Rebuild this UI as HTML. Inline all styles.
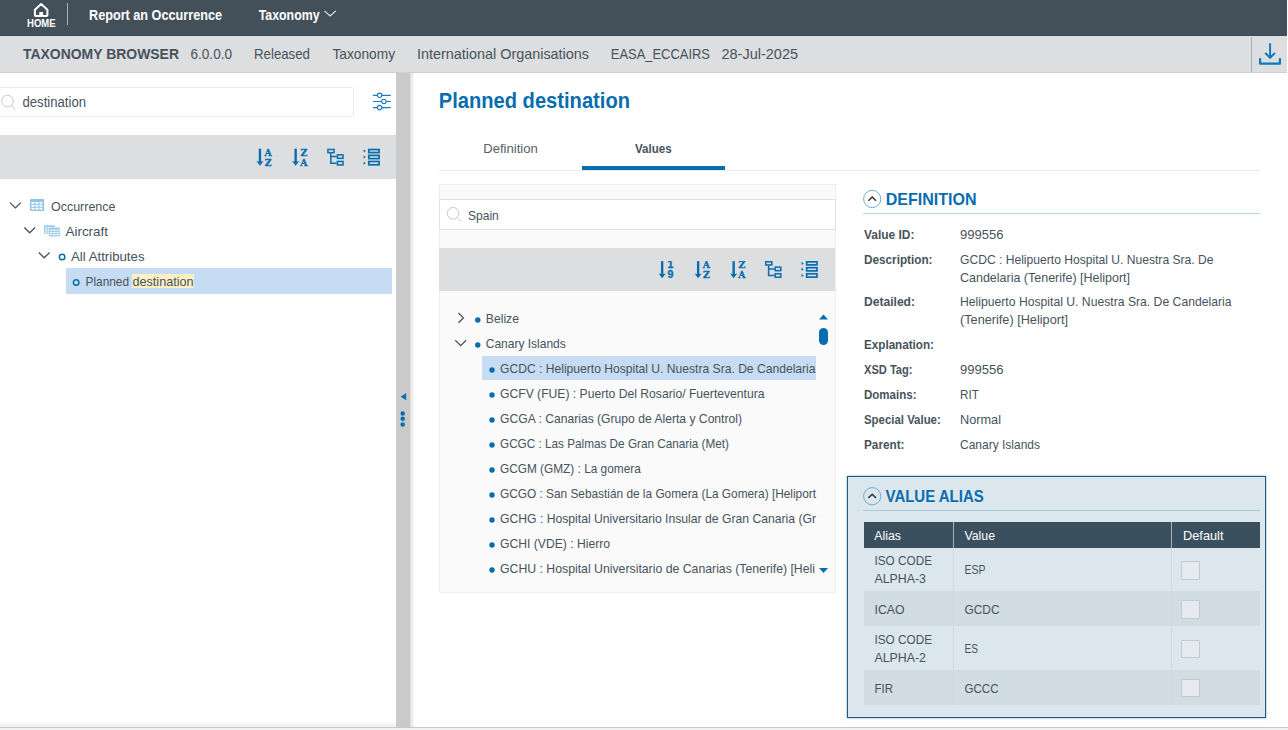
<!DOCTYPE html>
<html lang="en"><head><meta charset="utf-8"><title>Taxonomy Browser</title>
<style>
html,body{margin:0;padding:0;background:#fff;width:1288px;height:730px;overflow:hidden}
body{position:relative;font-family:"Liberation Sans",sans-serif}
.b{position:absolute;box-sizing:border-box;display:block}
.t{position:absolute;white-space:pre;line-height:normal;transform-origin:0 0;display:block}
section,header,nav,aside,main{display:block;margin:0;padding:0;height:0}
</style></head><body>
<header>
<div class="b" style="left:0px;top:0px;width:1287px;height:36px;background:#43505a;border-bottom:1px solid #3c4a54;"></div>
<svg class="b" style="left:32px;top:1px;" width="19" height="18" viewBox="0 0 19 18"><path d="M2.9 8.7L9.15 3L15.4 8.7V14Q15.4 14.9 14.5 14.9H3.8Q2.9 14.9 2.9 14Z" fill="none" stroke="#fff" stroke-width="2" stroke-linejoin="round"/><rect x="7.3" y="11" width="3.75" height="3.9" fill="#fff"/></svg>
<div class="b" style="left:67px;top:3px;width:1px;height:22px;background:rgba(255,255,255,.55);"></div>
<svg class="b" style="left:324px;top:10px;" width="13" height="8" viewBox="0 0 13 8"><g transform="translate(0 0.2)"><path d="M0.4 0.6L6.1 5.8L11.799999999999999 0.6" fill="none" stroke="#e8eaeb" stroke-width="1.1"/></g></svg>
<span class="t" style="left:27px;top:18px;font-size:10px;font-weight:700;color:#ffffff;transform:translate(0.00px,0.00px) scaleX(0.9533);">HOME</span>
<span class="t" style="left:89px;top:6px;font-size:14px;font-weight:700;color:#ffffff;transform:translate(0.00px,0.73px) scaleX(0.9044);">Report an Occurrence</span>
<span class="t" style="left:258px;top:6px;font-size:14px;font-weight:700;color:#ffffff;transform:translate(0.75px,0.73px) scaleX(0.8806);">Taxonomy</span>
</header>
<nav>
<div class="b" style="left:0px;top:36px;width:1287px;height:37px;background:#dcdedf;border-bottom:1px solid #cdd0d0;"></div>
<div class="b" style="left:1251px;top:37px;width:1px;height:35px;background:#a3b1ba;"></div>
<svg class="b" style="left:1258px;top:42px;" width="25" height="25" viewBox="0 0 25 25"><path d="M12.1 2V15.4M7.8 11.5L12.1 15.8L16.4 11.5" fill="none" stroke="#0a78be" stroke-width="1.9" stroke-linecap="round" stroke-linejoin="round"/><path d="M2.1 16.2V21.7H21.9V16.2" fill="none" stroke="#0a78be" stroke-width="2.2" stroke-linejoin="round"/></svg>
<span class="t" style="left:23px;top:44px;font-size:15px;font-weight:700;color:#47535c;transform:translate(0.00px,0.67px) scaleX(0.9297);">TAXONOMY BROWSER</span>
<span class="t" style="left:190px;top:44px;font-size:15px;color:#47535c;transform:translate(0.50px,0.67px) scaleX(0.9046);">6.0.0.0</span>
<span class="t" style="left:254px;top:44px;font-size:15px;color:#47535c;transform:translate(0.00px,0.67px) scaleX(0.8834);">Released</span>
<span class="t" style="left:332px;top:44px;font-size:15px;color:#47535c;transform:translate(0.50px,0.67px) scaleX(0.9141);">Taxonomy</span>
<span class="t" style="left:417px;top:44px;font-size:15px;color:#47535c;transform:translate(0.00px,0.67px) scaleX(0.9594);">International Organisations</span>
<span class="t" style="left:610px;top:44px;font-size:15px;color:#47535c;transform:translate(0.75px,0.67px) scaleX(0.8627);">EASA_ECCAIRS</span>
<span class="t" style="left:721px;top:44px;font-size:15px;color:#47535c;transform:translate(0.50px,0.67px) scaleX(0.9657);">28-Jul-2025</span>
</nav>
<aside>
<div class="b" style="left:-4px;top:87px;width:358px;height:30px;background:#fff;border:1px solid #ebedee;border-radius:2px;"></div>
<svg class="b" style="left:1px;top:94px;" width="17" height="17" viewBox="0 0 17 17"><g transform="translate(0 0.6)"><circle cx="6.45" cy="6.5" r="5.8" fill="none" stroke="#c6c9cb" stroke-width="1"/><path d="M10.6 10.65L14.2 14.7" stroke="#c6c9cb" stroke-width="1"/></g></svg>
<svg class="b" style="left:372px;top:92px;" width="20" height="19" viewBox="0 0 20 19"><g transform="translate(0.5 0.5)"><g stroke="#1a7cbd" stroke-width="1.15" fill="none"><path d="M0.4 2.8H4.9M9.3 2.8H18.2M0.4 8.95H9.2M13.6 8.95H18.2M0.4 15.1H4.9M9.3 15.1H18.2"/><circle cx="7.1" cy="2.8" r="2.2"/><circle cx="11.4" cy="8.95" r="2.2"/><circle cx="7.1" cy="15.1" r="2.2"/></g></g></svg>
<div class="b" style="left:0px;top:135px;width:396px;height:44px;background:#dcdedf;"></div>
<svg class="b" style="left:256px;top:148px;" width="18" height="19" viewBox="0 0 18 19"><g transform="translate(0.3 0.5)"><path d="M3.65 0.2V14" stroke="#086dae" stroke-width="2.4" fill="none"/><path d="M0 12.6Q3.65 13.6 7.3 12.6L3.65 17.3Z" fill="#086dae"/><text x="11.9" y="7.1" text-anchor="middle" font-family="DejaVu Serif,Liberation Serif,serif" font-weight="700" font-size="9.3" fill="#086dae" stroke="#086dae" stroke-width="0.3">A</text><text x="11.9" y="17.3" text-anchor="middle" font-family="DejaVu Serif,Liberation Serif,serif" font-weight="700" font-size="9.3" fill="#086dae" stroke="#086dae" stroke-width="0.3">Z</text></g></svg>
<svg class="b" style="left:292px;top:148px;" width="18" height="19" viewBox="0 0 18 19"><g transform="translate(0 0.5)"><path d="M3.65 0.2V14" stroke="#086dae" stroke-width="2.4" fill="none"/><path d="M0 12.6Q3.65 13.6 7.3 12.6L3.65 17.3Z" fill="#086dae"/><text x="11.9" y="7.1" text-anchor="middle" font-family="DejaVu Serif,Liberation Serif,serif" font-weight="700" font-size="9.3" fill="#086dae" stroke="#086dae" stroke-width="0.3">Z</text><text x="11.9" y="17.3" text-anchor="middle" font-family="DejaVu Serif,Liberation Serif,serif" font-weight="700" font-size="9.3" fill="#086dae" stroke="#086dae" stroke-width="0.3">A</text></g></svg>
<svg class="b" style="left:327px;top:148px;" width="18" height="19" viewBox="0 0 18 19"><g transform="translate(0.2 0.7)"><g fill="none" stroke="#086dae" stroke-width="1.5"><rect x="0.75" y="0.75" width="6.1" height="3.2"/><rect x="10.2" y="6.15" width="5.6" height="3.5"/><rect x="10.2" y="12.75" width="5.6" height="3.5"/><path d="M3.6 4.6V14.5H9.5M3.6 7.9H9.5"/></g></g></svg>
<svg class="b" style="left:363px;top:148px;" width="18" height="19" viewBox="0 0 18 19"><g transform="translate(0.6 0.7)"><g fill="none" stroke="#086dae" stroke-width="1.7"><rect x="5.2" y="0.85" width="10.3" height="3"/><rect x="5.2" y="6.7" width="10.3" height="3.2"/><rect x="5.2" y="12.8" width="10.3" height="3.3"/></g><g fill="#086dae"><path d="M0 0.9L2.3 2.4L0 3.9Z"/><path d="M0 6.8L2.3 8.3L0 9.8Z"/><path d="M0 13L2.3 14.5L0 16Z"/></g></g></svg>
<svg class="b" style="left:9px;top:202px;" width="13" height="7" viewBox="0 0 13 7"><g transform="translate(0.6 0.0)"><path d="M0.4 0.6L5.8 5.9L11.2 0.6" fill="none" stroke="#47535c" stroke-width="1.3"/></g></svg>
<svg class="b" style="left:29px;top:198px;" width="16" height="14" viewBox="0 0 16 14"><g transform="translate(0.9 0.9)"><rect x="0" y="0" width="14.2" height="12.1" rx="1.2" fill="#8ec5e9"/><rect x="1.50" y="3.00" width="3.0" height="1.9" fill="#fff"/><rect x="1.50" y="5.90" width="3.0" height="1.9" fill="#fff"/><rect x="1.50" y="8.80" width="3.0" height="1.9" fill="#fff"/><rect x="5.50" y="3.00" width="3.0" height="1.9" fill="#fff"/><rect x="5.50" y="5.90" width="3.0" height="1.9" fill="#fff"/><rect x="5.50" y="8.80" width="3.0" height="1.9" fill="#fff"/><rect x="9.50" y="3.00" width="3.0" height="1.9" fill="#fff"/><rect x="9.50" y="5.90" width="3.0" height="1.9" fill="#fff"/><rect x="9.50" y="8.80" width="3.0" height="1.9" fill="#fff"/></g></svg>
<svg class="b" style="left:23px;top:226px;" width="13" height="8" viewBox="0 0 13 8"><g transform="translate(0.9 0.9)"><path d="M0.4 0.6L5.8 5.9L11.2 0.6" fill="none" stroke="#47535c" stroke-width="1.3"/></g></svg>
<svg class="b" style="left:44px;top:225px;" width="18" height="14" viewBox="0 0 18 14"><g transform="translate(0.05 0.2)"><rect x="0" y="0" width="10.9" height="8.5" rx="0.8" fill="#9ccbeb"/><rect x="1.10" y="2.20" width="2.3" height="1.1" fill="#fff"/><rect x="1.10" y="4.30" width="2.3" height="1.1" fill="#fff"/><rect x="1.10" y="6.40" width="2.3" height="1.1" fill="#fff"/><rect x="4.30" y="2.20" width="2.3" height="1.1" fill="#fff"/><rect x="4.30" y="4.30" width="2.3" height="1.1" fill="#fff"/><rect x="4.30" y="6.40" width="2.3" height="1.1" fill="#fff"/><rect x="7.50" y="2.20" width="2.3" height="1.1" fill="#fff"/><rect x="7.50" y="4.30" width="2.3" height="1.1" fill="#fff"/><rect x="7.50" y="6.40" width="2.3" height="1.1" fill="#fff"/><rect x="4.4" y="1.8" width="12" height="10" rx="0.8" fill="#fff"/><rect x="4.85" y="2.2" width="10.9" height="9.2" rx="0.8" fill="#9ccbeb"/><rect x="6.00" y="4.50" width="2.3" height="1.2" fill="#fff"/><rect x="6.00" y="6.70" width="2.3" height="1.2" fill="#fff"/><rect x="6.00" y="8.90" width="2.3" height="1.2" fill="#fff"/><rect x="9.20" y="4.50" width="2.3" height="1.2" fill="#fff"/><rect x="9.20" y="6.70" width="2.3" height="1.2" fill="#fff"/><rect x="9.20" y="8.90" width="2.3" height="1.2" fill="#fff"/><rect x="12.40" y="4.50" width="2.3" height="1.2" fill="#fff"/><rect x="12.40" y="6.70" width="2.3" height="1.2" fill="#fff"/><rect x="12.40" y="8.90" width="2.3" height="1.2" fill="#fff"/></g></svg>
<svg class="b" style="left:38px;top:251px;" width="13" height="8" viewBox="0 0 13 8"><g transform="translate(0.4 0.9)"><path d="M0.4 0.6L5.8 5.9L11.2 0.6" fill="none" stroke="#47535c" stroke-width="1.3"/></g></svg>
<svg class="b" style="left:57px;top:252px;" width="11" height="11" viewBox="0 0 11 11"><g transform="translate(0.1 0.1)"><circle cx="5" cy="5" r="2.75" fill="none" stroke="#086dae" stroke-width="1.5"/></g></svg>
<div class="b" style="left:65.5px;top:268px;width:326.5px;height:26px;background:#c6dcf2;"></div>
<svg class="b" style="left:71px;top:277px;" width="11" height="11" viewBox="0 0 11 11"><g transform="translate(0.15 0.4)"><circle cx="5" cy="5" r="2.75" fill="none" stroke="#086dae" stroke-width="1.5"/></g></svg>
<div class="b" style="left:132px;top:274px;width:62px;height:14px;background:#fdf0c4;"></div>
<span class="t" style="left:22px;top:94px;font-size:14px;color:#47535c;transform:translate(0.50px,0.33px) scaleX(0.9377);">destination</span>
<span class="t" style="left:51px;top:198px;font-size:13px;color:#47535c;transform:translate(0.00px,0.94px) scaleX(0.9598);">Occurrence</span>
<span class="t" style="left:65px;top:223px;font-size:13px;color:#47535c;transform:translate(0.50px,0.94px) scaleX(1.0323);">Aircraft</span>
<span class="t" style="left:71px;top:248px;font-size:13px;color:#47535c;transform:translate(0.00px,0.94px) scaleX(1.0171);">All Attributes</span>
<span class="t" style="left:85px;top:273px;font-size:13px;color:#47535c;transform:translate(0.50px,0.94px) scaleX(0.9116);">Planned</span>
<span class="t" style="left:132px;top:273px;font-size:13px;color:#47535c;transform:translate(0.50px,0.94px) scaleX(0.9699);">destination</span>
</aside>
<div>
<div class="b" style="left:396px;top:73px;width:14px;height:654px;background:#cacaca;"></div>
<div class="b" style="left:410px;top:73px;width:5px;height:654px;background:linear-gradient(to right,rgba(0,0,0,.13),rgba(0,0,0,0))"></div>
<svg class="b" style="left:399px;top:393px;" width="8" height="9" viewBox="0 0 8 9"><g transform="translate(0.8 0)"><path d="M6.4 0.1V7.3L0.9 3.7Z" fill="#086dae"/></g></svg>
<svg class="b" style="left:399px;top:410px;" width="9" height="19" viewBox="0 0 9 19"><circle cx="3.7" cy="3.4" r="2.25" fill="#086dae"/><circle cx="3.7" cy="8.85" r="2.25" fill="#086dae"/><circle cx="3.7" cy="14.4" r="2.25" fill="#086dae"/></svg>
</div>
<main>
<div class="b" style="left:439px;top:170px;width:821px;height:1px;background:#e9e9e9;"></div>
<div class="b" style="left:582px;top:166px;width:142.5px;height:4px;background:#086dae;"></div>
<span class="t" style="left:438px;top:88px;font-size:22px;font-weight:700;color:#086dae;transform:translate(0.70px,0.09px) scaleX(0.9152);">Planned destination</span>
<span class="t" style="left:483px;top:141px;font-size:13px;color:#55616a;transform:translate(0.25px,0.04px) scaleX(1.0046);">Definition</span>
<span class="t" style="left:635px;top:141px;font-size:13px;font-weight:700;color:#47535c;transform:translate(0.00px,0.04px) scaleX(0.8907);">Values</span>
<section>
<div class="b" style="left:439px;top:184px;width:397px;height:409px;background:#fafafa;border:1px solid #eeeeee;"></div>
<div class="b" style="left:439px;top:199px;width:397px;height:31px;background:#fff;border:1px solid #e2e2e2;"></div>
<svg class="b" style="left:446px;top:206px;" width="17" height="17" viewBox="0 0 17 17"><g transform="translate(0.65 0.8)"><circle cx="6.45" cy="6.5" r="5.8" fill="none" stroke="#c6c9cb" stroke-width="1"/><path d="M10.6 10.65L14.2 14.7" stroke="#c6c9cb" stroke-width="1"/></g></svg>
<div class="b" style="left:439px;top:248px;width:396px;height:43px;background:#dcdedf;"></div>
<svg class="b" style="left:658px;top:261px;" width="18" height="19" viewBox="0 0 18 19"><g transform="translate(0.5 0)"><path d="M3.65 0.2V14" stroke="#086dae" stroke-width="2.4" fill="none"/><path d="M0 12.6Q3.65 13.6 7.3 12.6L3.65 17.3Z" fill="#086dae"/><text x="11.9" y="7.1" text-anchor="middle" font-family="Liberation Sans,sans-serif" font-weight="700" font-size="10.6" fill="#086dae" stroke="#086dae" stroke-width="0.3">1</text><text x="11.9" y="17.3" text-anchor="middle" font-family="Liberation Sans,sans-serif" font-weight="700" font-size="10.6" fill="#086dae" stroke="#086dae" stroke-width="0.3">9</text></g></svg>
<svg class="b" style="left:694px;top:261px;" width="18" height="19" viewBox="0 0 18 19"><g transform="translate(0.5 0)"><path d="M3.65 0.2V14" stroke="#086dae" stroke-width="2.4" fill="none"/><path d="M0 12.6Q3.65 13.6 7.3 12.6L3.65 17.3Z" fill="#086dae"/><text x="11.9" y="7.1" text-anchor="middle" font-family="DejaVu Serif,Liberation Serif,serif" font-weight="700" font-size="9.3" fill="#086dae" stroke="#086dae" stroke-width="0.3">A</text><text x="11.9" y="17.3" text-anchor="middle" font-family="DejaVu Serif,Liberation Serif,serif" font-weight="700" font-size="9.3" fill="#086dae" stroke="#086dae" stroke-width="0.3">Z</text></g></svg>
<svg class="b" style="left:730px;top:261px;" width="18" height="19" viewBox="0 0 18 19"><path d="M3.65 0.2V14" stroke="#086dae" stroke-width="2.4" fill="none"/><path d="M0 12.6Q3.65 13.6 7.3 12.6L3.65 17.3Z" fill="#086dae"/><text x="11.9" y="7.1" text-anchor="middle" font-family="DejaVu Serif,Liberation Serif,serif" font-weight="700" font-size="9.3" fill="#086dae" stroke="#086dae" stroke-width="0.3">Z</text><text x="11.9" y="17.3" text-anchor="middle" font-family="DejaVu Serif,Liberation Serif,serif" font-weight="700" font-size="9.3" fill="#086dae" stroke="#086dae" stroke-width="0.3">A</text></svg>
<svg class="b" style="left:765px;top:261px;" width="18" height="19" viewBox="0 0 18 19"><g fill="none" stroke="#086dae" stroke-width="1.5"><rect x="0.75" y="0.75" width="6.1" height="3.2"/><rect x="10.2" y="6.15" width="5.6" height="3.5"/><rect x="10.2" y="12.75" width="5.6" height="3.5"/><path d="M3.6 4.6V14.5H9.5M3.6 7.9H9.5"/></g></svg>
<svg class="b" style="left:801px;top:261px;" width="18" height="19" viewBox="0 0 18 19"><g transform="translate(0.5 0)"><g fill="none" stroke="#086dae" stroke-width="1.7"><rect x="5.2" y="0.85" width="10.3" height="3"/><rect x="5.2" y="6.7" width="10.3" height="3.2"/><rect x="5.2" y="12.8" width="10.3" height="3.3"/></g><g fill="#086dae"><path d="M0 0.9L2.3 2.4L0 3.9Z"/><path d="M0 6.8L2.3 8.3L0 9.8Z"/><path d="M0 13L2.3 14.5L0 16Z"/></g></g></svg>
<svg class="b" style="left:457px;top:312px;" width="8" height="12" viewBox="0 0 8 12"><g transform="translate(0.8 0.3)"><path d="M0.7 0.7L5.6 5.6L0.7 10.5" fill="none" stroke="#47535c" stroke-width="1.3"/></g></svg>
<svg class="b" style="left:473px;top:316px;" width="9" height="9" viewBox="0 0 9 9"><g transform="translate(0.75 0)"><circle cx="4" cy="4" r="2.7" fill="#086dae"/></g></svg>
<svg class="b" style="left:454px;top:339px;" width="13" height="8" viewBox="0 0 13 8"><g transform="translate(0.9 0.7)"><path d="M0.4 0.6L5.8 5.9L11.2 0.6" fill="none" stroke="#47535c" stroke-width="1.3"/></g></svg>
<svg class="b" style="left:473px;top:341px;" width="9" height="9" viewBox="0 0 9 9"><g transform="translate(0.75 0)"><circle cx="4" cy="4" r="2.7" fill="#086dae"/></g></svg>
<div class="b" style="left:482px;top:356px;width:334px;height:24px;background:#c6dcf2;"></div>
<svg class="b" style="left:488px;top:366px;" width="9" height="9" viewBox="0 0 9 9"><circle cx="4" cy="4" r="2.7" fill="#086dae"/></svg><svg class="b" style="left:488px;top:391px;" width="9" height="9" viewBox="0 0 9 9"><circle cx="4" cy="4" r="2.7" fill="#086dae"/></svg><svg class="b" style="left:488px;top:416px;" width="9" height="9" viewBox="0 0 9 9"><circle cx="4" cy="4" r="2.7" fill="#086dae"/></svg><svg class="b" style="left:488px;top:441px;" width="9" height="9" viewBox="0 0 9 9"><circle cx="4" cy="4" r="2.7" fill="#086dae"/></svg><svg class="b" style="left:488px;top:466px;" width="9" height="9" viewBox="0 0 9 9"><circle cx="4" cy="4" r="2.7" fill="#086dae"/></svg><svg class="b" style="left:488px;top:491px;" width="9" height="9" viewBox="0 0 9 9"><circle cx="4" cy="4" r="2.7" fill="#086dae"/></svg><svg class="b" style="left:488px;top:516px;" width="9" height="9" viewBox="0 0 9 9"><circle cx="4" cy="4" r="2.7" fill="#086dae"/></svg><svg class="b" style="left:488px;top:541px;" width="9" height="9" viewBox="0 0 9 9"><circle cx="4" cy="4" r="2.7" fill="#086dae"/></svg><svg class="b" style="left:488px;top:566px;" width="9" height="9" viewBox="0 0 9 9"><circle cx="4" cy="4" r="2.7" fill="#086dae"/></svg>
<svg class="b" style="left:819px;top:314px;" width="10" height="6" viewBox="0 0 10 6"><g transform="translate(0 0.5)"><path d="M0 5L4.5 0L9 5Z" fill="#086dae"/></g></svg>
<div class="b" style="left:819px;top:328px;width:9px;height:17px;background:#086dae;border-radius:4.5px;"></div>
<svg class="b" style="left:819px;top:568px;" width="10" height="6" viewBox="0 0 10 6"><path d="M0 0L4.5 5L9 0Z" fill="#086dae"/></svg>
<span class="t" style="left:468px;top:207px;font-size:13px;color:#47535c;transform:translate(0.00px,0.74px) scaleX(0.9248);">Spain</span>
<span class="t" style="left:485px;top:310px;font-size:13px;color:#47535c;transform:translate(0.75px,0.74px) scaleX(0.9387);">Belize</span>
<span class="t" style="left:485px;top:335px;font-size:13px;color:#47535c;transform:translate(0.75px,0.74px) scaleX(0.9225);">Canary Islands</span>
<span class="t" style="left:500px;top:360px;font-size:13px;color:#47535c;transform:translate(0.00px,0.74px) scaleX(0.9311);">GCDC : Helipuerto Hospital U. Nuestra Sra. De Candelaria</span>
<span class="t" style="left:500px;top:385px;font-size:13px;color:#47535c;transform:translate(0.00px,0.74px) scaleX(0.9340);">GCFV (FUE) : Puerto Del Rosario/ Fuerteventura</span>
<span class="t" style="left:500px;top:410px;font-size:13px;color:#47535c;transform:translate(0.00px,0.74px) scaleX(0.9330);">GCGA : Canarias (Grupo de Alerta y Control)</span>
<span class="t" style="left:500px;top:435px;font-size:13px;color:#47535c;transform:translate(0.00px,0.74px) scaleX(0.9031);">GCGC : Las Palmas De Gran Canaria (Met)</span>
<span class="t" style="left:500px;top:460px;font-size:13px;color:#47535c;transform:translate(0.00px,0.74px) scaleX(0.9105);">GCGM (GMZ) : La gomera</span>
<span class="t" style="left:500px;top:485px;font-size:13px;color:#47535c;transform:translate(0.00px,0.74px) scaleX(0.9111);">GCGO : San Sebastián de la Gomera (La Gomera) [Heliport</span>
<span class="t" style="left:500px;top:510px;font-size:13px;color:#47535c;transform:translate(0.00px,0.74px) scaleX(0.9366);">GCHG : Hospital Universitario Insular de Gran Canaria (Gr</span>
<span class="t" style="left:500px;top:535px;font-size:13px;color:#47535c;transform:translate(0.00px,0.74px) scaleX(0.9343);">GCHI (VDE) : Hierro</span>
<span class="t" style="left:500px;top:560px;font-size:13px;color:#47535c;transform:translate(0.00px,0.74px) scaleX(0.9437);">GCHU : Hospital Universitario de Canarias (Tenerife) [Heli</span>
</section>
<section>
<svg class="b" style="left:863px;top:189px;" width="20" height="20" viewBox="0 0 20 20"><g transform="translate(0 0.8)"><circle cx="9.2" cy="9.2" r="8.6" fill="none" stroke="#5fa6d6" stroke-width="0.9"/><path d="M5.4 10.9L9.2 7.2L13 10.9" fill="none" stroke="#333" stroke-width="1.5"/></g></svg>
<div class="b" style="left:863px;top:213px;width:397px;height:1px;background:#b5d6ec;"></div>
<span class="t" style="left:885px;top:189px;font-size:17px;font-weight:700;color:#086dae;transform:translate(0.75px,0.62px) scaleX(0.9419);">DEFINITION</span>
<span class="t" style="left:864px;top:226px;font-size:13px;font-weight:700;color:#47535c;transform:translate(0.00px,0.54px) scaleX(0.9195);">Value ID:</span>
<span class="t" style="left:864px;top:251px;font-size:13px;font-weight:700;color:#47535c;transform:translate(0.00px,0.54px) scaleX(0.9032);">Description:</span>
<span class="t" style="left:864px;top:294px;font-size:13px;font-weight:700;color:#47535c;transform:translate(0.00px,0.04px) scaleX(0.9289);">Detailed:</span>
<span class="t" style="left:864px;top:337px;font-size:13px;font-weight:700;color:#47535c;transform:translate(0.00px,0.04px) scaleX(0.8973);">Explanation:</span>
<span class="t" style="left:864px;top:362px;font-size:13px;font-weight:700;color:#47535c;transform:translate(0.00px,0.04px) scaleX(0.8535);">XSD Tag:</span>
<span class="t" style="left:864px;top:387px;font-size:13px;font-weight:700;color:#47535c;transform:translate(0.00px,0.04px) scaleX(0.8863);">Domains:</span>
<span class="t" style="left:864px;top:412px;font-size:13px;font-weight:700;color:#47535c;transform:translate(0.00px,0.04px) scaleX(0.8778);">Special Value:</span>
<span class="t" style="left:864px;top:437px;font-size:13px;font-weight:700;color:#47535c;transform:translate(0.00px,0.04px) scaleX(0.9041);">Parent:</span>
<span class="t" style="left:960px;top:226px;font-size:13px;color:#47535c;transform:translate(0.00px,0.54px) scaleX(1.0025);">999556</span>
<span class="t" style="left:960px;top:251px;font-size:13px;color:#47535c;transform:translate(0.00px,0.54px) scaleX(0.9307);">GCDC : Helipuerto Hospital U. Nuestra Sra. De</span>
<span class="t" style="left:960px;top:269px;font-size:13px;color:#47535c;transform:translate(0.00px,0.54px) scaleX(0.9603);">Candelaria (Tenerife) [Heliport]</span>
<span class="t" style="left:960px;top:294px;font-size:13px;color:#47535c;transform:translate(0.00px,0.04px) scaleX(0.9370);">Helipuerto Hospital U. Nuestra Sra. De Candelaria</span>
<span class="t" style="left:960px;top:312px;font-size:13px;color:#47535c;transform:translate(0.00px,0.04px) scaleX(0.9770);">(Tenerife) [Heliport]</span>
<span class="t" style="left:960px;top:362px;font-size:13px;color:#47535c;transform:translate(0.00px,0.04px) scaleX(1.0025);">999556</span>
<span class="t" style="left:960px;top:387px;font-size:13px;color:#47535c;transform:translate(0.00px,0.04px) scaleX(0.8949);">RIT</span>
<span class="t" style="left:960px;top:412px;font-size:13px;color:#47535c;transform:translate(0.00px,0.04px) scaleX(0.9784);">Normal</span>
<span class="t" style="left:960px;top:437px;font-size:13px;color:#47535c;transform:translate(0.00px,0.04px) scaleX(0.9225);">Canary Islands</span>
</section>
<section>
<div class="b" style="left:847px;top:476px;width:419px;height:242px;background:#dce7ed;border:1px solid #1d5c80;box-shadow:0 0 2px rgba(29,92,128,.6);"></div>
<svg class="b" style="left:863px;top:487px;" width="20" height="20" viewBox="0 0 20 20"><circle cx="9.2" cy="9.2" r="8.6" fill="none" stroke="#5fa6d6" stroke-width="0.9"/><path d="M5.4 10.9L9.2 7.2L13 10.9" fill="none" stroke="#333" stroke-width="1.5"/></svg>
<div class="b" style="left:863px;top:510px;width:397px;height:1px;background:#a9cbe0;"></div>
<div class="b" style="left:864px;top:522px;width:396px;height:25.5px;background:#3b505e;"></div>
<div class="b" style="left:953px;top:522px;width:1px;height:25.5px;background:#a8b4bc;"></div>
<div class="b" style="left:1171px;top:522px;width:1px;height:25.5px;background:#a8b4bc;"></div>
<div class="b" style="left:864px;top:591px;width:396px;height:35.25px;background:#d1dce3;"></div>
<div class="b" style="left:864px;top:669.5px;width:396px;height:35.0px;background:#d1dce3;"></div>
<div class="b" style="left:953px;top:547.5px;width:1px;height:157.0px;background:#cfd8de;"></div>
<div class="b" style="left:1171px;top:547.5px;width:1px;height:157.0px;background:#cfd8de;"></div>
<div class="b" style="left:1181px;top:561px;width:18.5px;height:18.5px;background:#e3ebf0;border:1px solid #c3c9cd;border-radius:1px;"></div><div class="b" style="left:1181px;top:600px;width:18.5px;height:18.5px;background:#e3ebf0;border:1px solid #c3c9cd;border-radius:1px;"></div><div class="b" style="left:1181px;top:639.5px;width:18.5px;height:18.5px;background:#e3ebf0;border:1px solid #c3c9cd;border-radius:1px;"></div><div class="b" style="left:1181px;top:678.5px;width:18.5px;height:18.5px;background:#e3ebf0;border:1px solid #c3c9cd;border-radius:1px;"></div>
<span class="t" style="left:885px;top:487px;font-size:17px;font-weight:700;color:#086dae;transform:translate(0.50px,0.37px) scaleX(0.8815);">VALUE ALIAS</span>
<span class="t" style="left:874px;top:527px;font-size:13px;color:#ffffff;transform:translate(0.25px,0.74px) scaleX(0.9490);">Alias</span>
<span class="t" style="left:964px;top:527px;font-size:13px;color:#ffffff;transform:translate(0.50px,0.74px) scaleX(0.9444);">Value</span>
<span class="t" style="left:1183px;top:527px;font-size:13px;color:#ffffff;transform:translate(0.00px,0.74px) scaleX(0.9829);">Default</span>
<span class="t" style="left:874px;top:553px;font-size:13px;color:#47535c;transform:translate(0.50px,0.13px) scaleX(0.9044);">ISO CODE</span>
<span class="t" style="left:874px;top:570px;font-size:13px;color:#47535c;transform:translate(0.50px,0.63px) scaleX(0.9501);">ALPHA-3</span>
<span class="t" style="left:964px;top:561px;font-size:13px;color:#47535c;transform:translate(0.50px,0.94px) scaleX(0.8072);">ESP</span>
<span class="t" style="left:874px;top:601px;font-size:13px;color:#47535c;transform:translate(0.50px,0.84px) scaleX(0.9435);">ICAO</span>
<span class="t" style="left:964px;top:601px;font-size:13px;color:#47535c;transform:translate(0.50px,0.84px) scaleX(0.9143);">GCDC</span>
<span class="t" style="left:874px;top:632px;font-size:13px;color:#47535c;transform:translate(0.50px,0.13px) scaleX(0.9044);">ISO CODE</span>
<span class="t" style="left:874px;top:649px;font-size:13px;color:#47535c;transform:translate(0.50px,0.63px) scaleX(0.9501);">ALPHA-2</span>
<span class="t" style="left:964px;top:640px;font-size:13px;color:#47535c;transform:translate(0.50px,0.94px) scaleX(0.7784);">ES</span>
<span class="t" style="left:874px;top:680px;font-size:13px;color:#47535c;transform:translate(0.50px,0.74px) scaleX(0.8829);">FIR</span>
<span class="t" style="left:964px;top:680px;font-size:13px;color:#47535c;transform:translate(0.50px,0.74px) scaleX(0.8882);">GCCC</span>
</section>
</main>
<footer>
<div class="b" style="left:0;top:721px;width:396px;height:6px;background:linear-gradient(to bottom,rgba(0,0,0,0),rgba(0,0,0,.07))"></div>
<div class="b" style="left:0px;top:727px;width:1288px;height:1px;background:#c8c8c8;"></div>
<div class="b" style="left:0px;top:728px;width:1288px;height:2px;background:#f2f2f2;"></div>
</footer>
</body></html>
